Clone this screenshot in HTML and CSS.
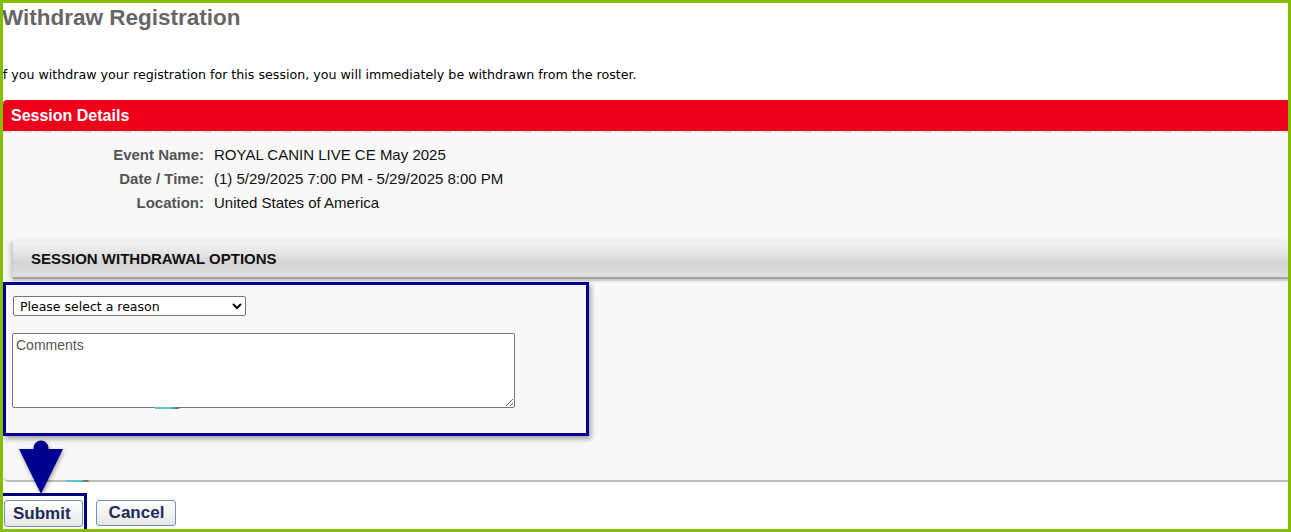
FILE: index.html
```html
<!DOCTYPE html>
<html lang="en">
<head>
    <meta charset="UTF-8">
    <meta name="viewport" content="width=device-width, initial-scale=1.0">
    <title>Withdraw Registration</title>
    <link rel="stylesheet" href="styles.css">
</head>
<body>
    <h1 class="page-title">Withdraw Registration</h1>
    <p class="intro">If you withdraw your registration for this session, you will immediately be withdrawn from the roster.</p>

    <div class="section-bar">Session Details</div>
    <div class="panel">
        <div class="details">
            <span class="label">Event Name:</span>
            <span class="value">ROYAL CANIN LIVE CE May 2025</span>
            <span class="label">Date / Time:</span>
            <span class="value">(1) 5/29/2025 7:00 PM - 5/29/2025 8:00 PM</span>
            <span class="label">Location:</span>
            <span class="value">United States of America</span>
        </div>

        <div class="options-header">SESSION WITHDRAWAL OPTIONS</div>
        <div class="options-body">
            <select class="reason">
                <option>Please select a reason</option>
                <option>Schedule conflict</option>
                <option>No longer interested</option>
                <option>Other</option>
            </select>
            <textarea class="comments" placeholder="Comments"></textarea>
        </div>
    </div>

    <div class="actions">
        <span class="highlight"><button class="btn">Submit</button></span>
        <button class="btn">Cancel</button>
    </div>

    <!-- annotation overlays -->
    <svg class="pointer" width="46" height="56" viewBox="0 0 46 56">
        <circle cx="23" cy="8" r="7.5" fill="#000090"/>
        <polygon points="1,9 45,9 23,54" fill="#000090"/>
    </svg>
    <span class="tick tick-one"></span>
    <span class="tick tick-two"></span>
    <div class="frame"></div>
</body>
</html>
```

FILE: styles.css
```css
body {
    margin: 0;
    font-family: 'Liberation Sans', Arial, sans-serif;
    font-size: 14px;
    color: #000;
    background-color: #fff;
}

.frame {
    position: fixed;
    top: 0;
    left: 0;
    right: 0;
    bottom: 0;
    border: 3px solid #84bf00;
    pointer-events: none;
}

.page-title {
    margin: 0 0 0 2px;
    padding-top: 5px;
    font-size: 22.5px;
    line-height: 26px;
    font-weight: bold;
    color: #666;
}

.intro {
    margin: 36px 0 17px -1px;
    font-family: 'DejaVu Sans', Verdana, sans-serif;
    font-size: 12.65px;
    line-height: 16px;
}

.section-bar {
    margin-left: 3px;
    height: 31px;
    line-height: 31px;
    padding-left: 8px;
    background-color: #ec001c;
    border-top-left-radius: 4px;
    color: #fff;
    font-size: 16px;
    font-weight: bold;
}

.panel {
    margin-left: 3px;
    padding: 12px 0 44px;
    background-color: #f8f8f8;
    background-image: repeating-linear-gradient(90deg, #e2e2e2 0 9px, #fff 9px 11px, #f0f0f0 11px 20px);
    background-size: 100% 2px;
    background-repeat: no-repeat;
    border-bottom: 2px solid #bdbdbd;
    border-bottom-left-radius: 5px;
}

.details {
    display: grid;
    grid-template-columns: 201px 1fr;
    column-gap: 10px;
    font-size: 15px;
    line-height: 24px;
}

.label {
    text-align: right;
    font-weight: bold;
    color: #555;
}

.value {
    color: #111;
}

.options-header {
    margin: 26px 0 0 10px;
    height: 36px;
    line-height: 36px;
    padding-left: 18px;
    background: linear-gradient(#f3f3f3, #e4e4e4 35%, #d4d4d4 62%, #dfdfdf);
    border-bottom: 2px solid #a3a3a3;
    box-shadow: -3px 1px 4px rgba(0, 0, 0, 0.18), 0 2px 1px #e2e2e2;
    font-size: 15px;
    font-weight: bold;
    color: #111;
}

.options-body {
    width: 574px;
    margin-top: 3px;
    padding: 11px 0 25px 6px;
    border: 3px solid #000090;
    box-shadow: 2px 3px 5px rgba(0, 0, 0, 0.35);
    display: flex;
    flex-direction: column;
    align-items: flex-start;
    gap: 17px;
}

.reason {
    width: 233px;
    height: 20px;
    margin-left: 1px;
    padding: 0 2px;
    font-family: 'DejaVu Sans', Verdana, sans-serif;
    font-size: 12.5px;
    border: 1px solid #767676;
    border-radius: 2px;
    background-color: #fff;
    color: #000;
}

.comments {
    width: 503px;
    height: 75px;
    box-sizing: border-box;
    padding: 3px 3px;
    font-family: 'Liberation Sans', Arial, sans-serif;
    font-size: 14px;
    border: 1px solid #767676;
    border-radius: 2px;
    resize: both;
}

.comments::placeholder {
    color: #555;
}

.actions {
    margin-top: 11px;
    display: flex;
    align-items: flex-start;
    gap: 9px;
}

.highlight {
    display: inline-flex;
    padding: 4px 1px 3px;
    border: 3px solid #000080;
}

.btn {
    height: 27px;
    padding: 0 11px 0 8px;
    font-family: 'Liberation Sans', Arial, sans-serif;
    font-size: 17px;
    font-weight: bold;
    color: #1d2b5a;
    background: linear-gradient(#ffffff, #f3f3f3 50%, #e6e6e6);
    border: 1px solid #6f93b8;
    border-radius: 3px;
    cursor: pointer;
}

.actions > .btn {
    margin-top: 7px;
    height: 26px;
    padding: 0 11px 0 12px;
}

.pointer {
    position: absolute;
    left: 18px;
    top: 440px;
    filter: drop-shadow(1px 2px 2px rgba(0, 0, 0, 0.35));
}

.tick {
    position: absolute;
    height: 2px;
    background: linear-gradient(90deg, #55c8d2 60%, #666 85%, rgba(120, 120, 120, 0));
}

.tick-one {
    left: 155px;
    top: 407px;
    width: 26px;
}

.tick-two {
    left: 66px;
    top: 480px;
    width: 24px;
}
```
